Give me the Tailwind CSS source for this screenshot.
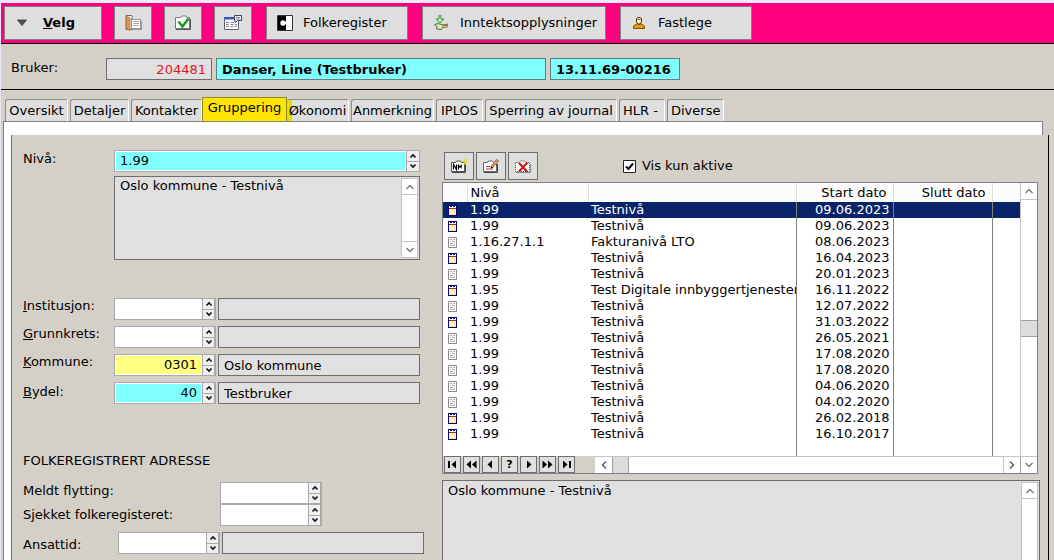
<!DOCTYPE html>
<html lang="no">
<head>
<meta charset="utf-8">
<meta name="viewport" content="width=device-width, initial-scale=1">
<title>Bruker – Gruppering</title>
<script src="https://cdn.jsdelivr.net/npm/@tailwindcss/browser@4"></script>
</head>
<body class="flex h-screen flex-col overflow-hidden border-l border-[#e6e6f4] bg-[#d4d0c8] font-['DejaVu_Sans',sans-serif] text-[13px] leading-4 text-black">

<svg class="hidden">
  <symbol id="up" viewBox="0 0 8 6"><path d="M1.5 4.5 4 2l2.5 2.5" fill="none" stroke="#111" stroke-width="1.6"/></symbol>
  <symbol id="down" viewBox="0 0 8 6"><path d="M1.5 1.5 4 4l2.5-2.5" fill="none" stroke="#111" stroke-width="1.6"/></symbol>
  <symbol id="chev-up" viewBox="0 0 10 10"><path d="M1.5 7 5 3.5 8.500 7" fill="none" stroke="#777" stroke-width="1.4"/></symbol>
  <symbol id="chev-down" viewBox="0 0 10 10"><path d="M1.500 3 5 6.500 8.500 3" fill="none" stroke="#777" stroke-width="1.4"/></symbol>
  <symbol id="chev-left" viewBox="0 0 10 10"><path d="M7 1.500 3.500 5 7 8.500" fill="none" stroke="#555" stroke-width="1.4"/></symbol>
  <symbol id="chev-right" viewBox="0 0 10 10"><path d="M3 1.500 6.500 5 3 8.500" fill="none" stroke="#555" stroke-width="1.4"/></symbol>
  <symbol id="active" viewBox="0 0 9 11">
    <path d="M0 0h9v11H0z" fill="#00007a"/><path d="M1 3h7v7H1z" fill="#ffe98a"/><path d="M1 1h1v1H1zM4 1h1v1H4zM7 1h1v1H7zM1 2h7v1H1z" fill="#fff"/><path d="M1 3h7v1H1z" fill="#a03020"/>
    <path d="M2 5h1v1H2zM4 5h1v1H4zM6 5h1v1H6zM3 6h1v1H3zM5 6h1v1H5zM2 7h1v1H2zM4 7h1v1H4zM6 7h1v1H6zM3 8h1v1H3zM5 8h1v1H5z" fill="#fffbe0"/>
  </symbol>
  <symbol id="inactive" viewBox="0 0 9 11">
    <path d="M.5.5h8v10h-8z" fill="#fff" stroke="#8a8a8a"/><path d="M2 2.500h2M5 2.500h2M2 4.500h1M4 4.500h3M2 6.500h3M6 6.500h1M2 8.500h2M5 8.500h2" stroke="#a8a8a8"/>
  </symbol>
</svg>

<div class="h-[3px] shrink-0 bg-[#ececf8]"></div>

<!-- Toolbar -->
<header class="flex h-[41px] shrink-0 items-center border-b border-black bg-[#ff0080] pl-[3px]">
  <button class="flex h-[34px] w-[98px] items-center border border-[#808080] bg-[#dedede] pl-3 font-bold">
    <svg class="h-2 w-[10px]" viewBox="0 0 10 8"><path d="M.5 1h9L5 6.500z" fill="#555" stroke="#333" stroke-width=".8"/></svg>
    <span class="ml-4"><u>V</u>elg</span>
  </button>
  <button aria-label="Journal" class="ml-3 flex h-[34px] w-[38px] items-center justify-center border border-[#808080] bg-[#dedede]">
    <svg class="h-4 w-[18px]" viewBox="0 0 18 16"><path d="M2 .5h6v14H2z" fill="#fff" stroke="#8c6a48"/><path d="M2.500 1 6 3v12.500L2.500 14z" fill="#e0975a" stroke="#a8602c" stroke-width=".7"/><path d="M7.500 4.500h9v9h-9z" fill="#fff" stroke="#444" stroke-dasharray="1 1"/><path d="M9 6.500h6M9 8.500h6M9 10.500h6" stroke="#aaa"/><path d="M8 14.500h9.500V6" fill="none" stroke="#999"/></svg>
  </button>
  <button aria-label="Godkjenn" class="ml-3 flex h-[34px] w-[38px] items-center justify-center border border-[#808080] bg-[#dedede]">
    <svg class="h-4 w-4" viewBox="0 0 16 16"><path d="M.5 2.500h5l1.500-1.500h4l1 1.500h2.500v11H.5z" fill="#fdfdfd" stroke="#777"/><path d="M1 14.500h14.500V4" fill="none" stroke="#555"/><path d="M3.500 6.500 7.500 11.500 13.500 3.500" fill="none" stroke="#12a012" stroke-width="2.400"/></svg>
  </button>
  <button aria-label="Notat" class="ml-3 flex h-[34px] w-[38px] items-center justify-center border border-[#808080] bg-[#dedede]">
    <svg class="h-4 w-[18px]" viewBox="0 0 18 16"><path d="M.5 2.500h14v12H.5z" fill="#fff" stroke="#667"/><path d="M0 2h11v2.500H0z" fill="#3358c0"/><path d="M2 7.500h3M6.500 7.500h3M2 9.500h3M6.500 9.500h3M11 9.500h2M2 11.500h3M6.500 11.500h3M11 11.500h2" stroke="#889"/><path d="M10.500.5h7v5h-4l-2.500 2.500v-2.500h-.5z" fill="#e8eef8" stroke="#445"/><path d="M12 2.500h4M12 4h4" stroke="#778" stroke-width=".8"/></svg>
  </button>
  <button class="ml-3.5 flex h-[34px] w-[142px] items-center border border-[#808080] bg-[#dedede] pl-2.5">
    <svg class="h-4 w-4" viewBox="0 0 16 16"><path d="M.5.500h15v15H.5z" fill="#fff" stroke="#333"/><path d="M1 1h8v14H1z"/><circle cx="6" cy="8" r="2.700" fill="#fff"/><path d="M6 6.800h4v2.400H6z" fill="#fff"/></svg>
    <span class="ml-2.5">Folkeregister</span>
  </button>
  <button class="ml-3.5 flex h-[34px] w-[184px] items-center border border-[#808080] bg-[#dedede] pl-[11px]">
    <svg class="h-4 w-[15px]" viewBox="0 0 15 16"><path d="M5 0h2v4h3L6 8 2 4h3z" fill="#b8f0b0" stroke="#2f8a3c" stroke-width=".9"/><path d="M.5 9.500 4 8.500l5 1.500 4.500-1-1 2.500H9L7.500 14.500l-5-.5.5-2.500z" fill="#d8e8a8" stroke="#56725a"/><path d="M8 10.500h6l-1 2H9" fill="#e0b070" stroke="#9a7040" stroke-width=".8"/></svg>
    <span class="ml-[11px]">Inntektsopplysninger</span>
  </button>
  <button class="ml-3.5 flex h-[34px] w-[132px] items-center border border-[#808080] bg-[#dedede] pl-3">
    <svg class="h-3 w-3" viewBox="0 0 12 12"><path d="M.5 11.500V9L3.500 7h5l3 2v2.500z" fill="#e09a10" stroke="#805000"/><path d="M3.500 1.500 5 .5h2l1.500 1v3.500L7 7H5L3.500 5z" fill="#fff0b8" stroke="#4a3410"/><path d="M4.500 2.500h3" stroke="#805818"/></svg>
    <span class="ml-[13px]">Fastlege</span>
  </button>
</header>

<!-- Current user -->
<section class="flex h-[46px] shrink-0 items-start gap-1 border-b border-black pl-2.5 pt-3.5 font-bold">
  <label for="bruker" class="mt-0.5 w-[91px] font-normal">Bruker:</label>
  <input id="bruker" value="204481" class="h-[22px] w-[106px] border border-[#6e6e6e] bg-[#e0e0e0] px-[5px] text-right font-normal text-[#e01820]">
  <input aria-label="Navn" value="Danser, Line (Testbruker)" class="h-[22px] w-[330px] border border-[#5f7f80] bg-[#80ffff] px-[5px]">
  <input aria-label="Fødselsnummer" value="13.11.69-00216" class="h-[22px] w-[130px] border border-[#5f7f80] bg-[#80ffff] px-[5px]">
</section>

<!-- Tabs -->
<nav role="tablist" class="flex h-[31px] shrink-0 items-end gap-0.5 pl-1">
  <button role="tab" class="h-[22px] w-[63px] rounded-t-[3px] border border-b-0 border-[#8c8c8c] border-r-white bg-[#dedede]">Oversikt</button>
  <button role="tab" class="h-[22px] w-[59px] whitespace-nowrap rounded-t-[3px] border border-b-0 border-[#8c8c8c] border-r-white bg-[#dedede]">Detaljer</button>
  <button role="tab" class="h-[22px] w-[71px] whitespace-nowrap rounded-t-[3px] border border-b-0 border-[#8c8c8c] border-r-white bg-[#dedede]">Kontakter</button>
  <button role="tab" aria-selected="true" class="-ml-0.5 h-6 w-[85px] border border-b-0 border-[#8f8a20] bg-[#ffe600] pb-1">Gruppering</button>
  <button role="tab" class="-ml-0.5 h-[22px] w-[62px] whitespace-nowrap rounded-t-[3px] border border-b-0 border-l-0 border-[#8c8c8c] border-r-white bg-linear-to-r from-[#e6dc00] from-[5px] to-[#dedede] to-[5px]">Økonomi</button>
  <button role="tab" class="h-[22px] w-[83px] whitespace-nowrap rounded-t-[3px] border border-b-0 border-[#8c8c8c] border-r-white bg-[#dedede]">Anmerkning</button>
  <button role="tab" class="h-[22px] w-[47px] whitespace-nowrap rounded-t-[3px] border border-b-0 border-[#8c8c8c] border-r-white bg-[#dedede]">IPLOS</button>
  <button role="tab" class="h-[22px] w-[132px] whitespace-nowrap rounded-t-[3px] border border-b-0 border-[#8c8c8c] border-r-white bg-[#dedede]">Sperring av journal</button>
  <button role="tab" class="h-[22px] w-[46px] whitespace-nowrap rounded-t-[3px] border border-b-0 border-[#8c8c8c] border-r-white bg-[#dedede] pl-[3px] text-left">HLR -</button>
  <button role="tab" class="h-[22px] w-[57px] whitespace-nowrap rounded-t-[3px] border border-b-0 border-[#8c8c8c] border-r-white bg-[#dedede] pl-[3px] text-left">Diverse</button>
</nav>

<main class="flex min-h-0 grow flex-col pl-0.5">
  <div class="mr-[11px] h-3.5 shrink-0 border-x border-t border-[#808080] bg-white"></div>
  <div class="flex min-h-0 grow border-l border-[#808080] bg-white pl-[7px] pr-0">
    <div class="flex min-w-0 grow bg-[#d4d0c8] pr-[5px]">
      <div class="flex min-w-0 grow border-l border-r border-l-[#6e6e6e] border-r-black pl-[11px] pr-2">

        <!-- Left form -->
        <form class="w-[419px] shrink-0 pt-[15px]">
          <div class="flex items-start">
            <label for="niva" class="w-[91px] leading-[18px]">Nivå:</label>
            <span class="flex h-[22px] w-[306px] gap-px border border-[#a9a9ad] bg-white pl-px">
              <input id="niva" value="1.99" class="my-px min-w-0 grow bg-[#80ffff] pl-1">
              <span class="flex w-[13px] shrink-0 flex-col gap-px bg-[#a9a9ad] pl-px">
                <button type="button" aria-label="Opp" class="flex grow items-center justify-center bg-[#efefef]"><svg class="h-1.5 w-2"><use href="#up"/></svg></button>
                <button type="button" aria-label="Ned" class="flex grow items-center justify-center bg-[#efefef]"><svg class="h-1.5 w-2"><use href="#down"/></svg></button>
              </span>
            </span>
          </div>
          <div class="ml-[91px] mt-1 flex h-[84px] w-[306px] border border-[#6e6e6e] bg-[#e0e0e0] p-px">
            <textarea aria-label="Nivåbeskrivelse" readonly class="grow resize-none overflow-hidden pl-1">Oslo kommune - Testnivå</textarea>
            <span class="flex w-[17px] flex-col justify-between border border-[#c4c4c4] bg-white">
              <button type="button" aria-label="Rull opp" class="flex h-4 items-center justify-center border-b border-[#c4c4c4]"><svg class="size-2.5"><use href="#chev-up"/></svg></button>
              <button type="button" aria-label="Rull ned" class="flex h-4 items-center justify-center border-t border-[#c4c4c4]"><svg class="size-2.5"><use href="#chev-down"/></svg></button>
            </span>
          </div>

          <div class="mt-[38px] flex flex-col gap-1.5">
            <div class="flex items-start">
              <label for="inst" class="w-[91px]"><u>I</u>nstitusjon:</label>
              <span class="flex h-[22px] w-[102px] gap-px border border-r-2 border-[#a9a9ad] bg-white pl-px">
                <input id="inst" class="my-px min-w-0 grow bg-white pr-1 text-right">
                <span class="flex w-[12px] shrink-0 flex-col gap-px bg-[#a9a9ad] pl-px">
                  <button type="button" aria-label="Opp" class="flex grow items-center justify-center bg-[#efefef]"><svg class="h-1.5 w-2"><use href="#up"/></svg></button>
                  <button type="button" aria-label="Ned" class="flex grow items-center justify-center bg-[#efefef]"><svg class="h-1.5 w-2"><use href="#down"/></svg></button>
                </span>
              </span>
              <input aria-label="Institusjonsnavn" readonly class="ml-0.5 h-[22px] w-[202px] border border-[#6e6e6e] bg-[#e0e0e0] px-[5px]">
            </div>
            <div class="flex items-start">
              <label for="grunn" class="w-[91px]"><u>G</u>runnkrets:</label>
              <span class="flex h-[22px] w-[102px] gap-px border border-r-2 border-[#a9a9ad] bg-white pl-px">
                <input id="grunn" class="my-px min-w-0 grow bg-white pr-1 text-right">
                <span class="flex w-[12px] shrink-0 flex-col gap-px bg-[#a9a9ad] pl-px">
                  <button type="button" aria-label="Opp" class="flex grow items-center justify-center bg-[#efefef]"><svg class="h-1.5 w-2"><use href="#up"/></svg></button>
                  <button type="button" aria-label="Ned" class="flex grow items-center justify-center bg-[#efefef]"><svg class="h-1.5 w-2"><use href="#down"/></svg></button>
                </span>
              </span>
              <input aria-label="Grunnkretsnavn" readonly class="ml-0.5 h-[22px] w-[202px] border border-[#6e6e6e] bg-[#e0e0e0] px-[5px]">
            </div>
            <div class="flex items-start">
              <label for="komm" class="w-[91px]"><u>K</u>ommune:</label>
              <span class="flex h-[22px] w-[102px] gap-px border border-r-2 border-[#a9a9ad] bg-white pl-px">
                <input id="komm" value="0301" class="my-px min-w-0 grow bg-[#ffff80] pr-1 text-right">
                <span class="flex w-[12px] shrink-0 flex-col gap-px bg-[#a9a9ad] pl-px">
                  <button type="button" aria-label="Opp" class="flex grow items-center justify-center bg-[#efefef]"><svg class="h-1.5 w-2"><use href="#up"/></svg></button>
                  <button type="button" aria-label="Ned" class="flex grow items-center justify-center bg-[#efefef]"><svg class="h-1.5 w-2"><use href="#down"/></svg></button>
                </span>
              </span>
              <input aria-label="Kommunenavn" readonly value="Oslo kommune" class="ml-0.5 h-[22px] w-[202px] border border-[#6e6e6e] bg-[#e0e0e0] px-[5px]">
            </div>
            <div class="flex items-start">
              <label for="bydel" class="w-[91px] leading-5"><u>B</u>ydel:</label>
              <span class="flex h-[22px] w-[102px] gap-px border border-r-2 border-[#a9a9ad] bg-white pl-px">
                <input id="bydel" value="40" class="my-px min-w-0 grow bg-[#80ffff] pr-1 text-right">
                <span class="flex w-[12px] shrink-0 flex-col gap-px bg-[#a9a9ad] pl-px">
                  <button type="button" aria-label="Opp" class="flex grow items-center justify-center bg-[#efefef]"><svg class="h-1.5 w-2"><use href="#up"/></svg></button>
                  <button type="button" aria-label="Ned" class="flex grow items-center justify-center bg-[#efefef]"><svg class="h-1.5 w-2"><use href="#down"/></svg></button>
                </span>
              </span>
              <input aria-label="Bydelsnavn" readonly value="Testbruker" class="ml-0.5 h-[22px] w-[202px] border border-[#6e6e6e] bg-[#e0e0e0] px-[5px]">
            </div>
          </div>

          <h2 class="mt-12 leading-[18px]">FOLKEREGISTRERT ADRESSE</h2>
          <div class="mt-3 flex items-start">
            <label for="flytt" class="w-[197px] leading-[18px]">Meldt flytting:</label>
            <span class="flex h-[22px] w-[102px] gap-px border border-r-2 border-[#a9a9ad] bg-white pl-px">
              <input id="flytt" class="my-px min-w-0 grow bg-white">
              <span class="flex w-[12px] shrink-0 flex-col gap-px bg-[#a9a9ad] pl-px">
                <button type="button" aria-label="Opp" class="flex grow items-center justify-center bg-[#efefef]"><svg class="h-1.5 w-2"><use href="#up"/></svg></button>
                <button type="button" aria-label="Ned" class="flex grow items-center justify-center bg-[#efefef]"><svg class="h-1.5 w-2"><use href="#down"/></svg></button>
              </span>
            </span>
          </div>
          <div class="flex items-center">
            <label for="sjekk" class="w-[197px] leading-[18px]">Sjekket folkeregisteret:</label>
            <span class="flex h-[22px] w-[102px] gap-px border border-r-2 border-[#a9a9ad] bg-white pl-px">
              <input id="sjekk" class="my-px min-w-0 grow bg-white">
              <span class="flex w-[12px] shrink-0 flex-col gap-px bg-[#a9a9ad] pl-px">
                <button type="button" aria-label="Opp" class="flex grow items-center justify-center bg-[#efefef]"><svg class="h-1.5 w-2"><use href="#up"/></svg></button>
                <button type="button" aria-label="Ned" class="flex grow items-center justify-center bg-[#efefef]"><svg class="h-1.5 w-2"><use href="#down"/></svg></button>
              </span>
            </span>
          </div>
          <div class="mt-1.5 flex items-end">
            <label for="ansatt" class="w-[95px] leading-[18px]">Ansattid:</label>
            <span class="flex h-[22px] w-[102px] gap-px border border-r-2 border-[#a9a9ad] bg-white pl-px">
              <input id="ansatt" class="my-px min-w-0 grow bg-white">
              <span class="flex w-[12px] shrink-0 flex-col gap-px bg-[#a9a9ad] pl-px">
                <button type="button" aria-label="Opp" class="flex grow items-center justify-center bg-[#efefef]"><svg class="h-1.5 w-2"><use href="#up"/></svg></button>
                <button type="button" aria-label="Ned" class="flex grow items-center justify-center bg-[#efefef]"><svg class="h-1.5 w-2"><use href="#down"/></svg></button>
              </span>
            </span>
            <input aria-label="Ansattnavn" readonly class="ml-0.5 h-[22px] w-[202px] border border-[#6e6e6e] bg-[#e0e0e0] px-[5px]">
          </div>
        </form>

        <!-- Level history -->
        <section class="flex min-w-0 grow flex-col pt-[17px]">
          <div class="flex shrink-0 items-center gap-0.5 pl-0.5">
            <button aria-label="Ny" class="flex h-7 w-[30px] items-center justify-center border border-[#6e6e6e] bg-[#dedede]">
              <svg class="h-4 w-[18px]" viewBox="0 0 18 16"><path d="M1.500 4.500h4l1-1.500h4l1 1.500h3v9h-13z" fill="#fff" stroke="#555"/><path d="M2 14.500h13.500V6" fill="none" stroke="#444"/><path d="M3.500 11.500v-5l3 5v-5M8.500 6.500v5M8 6.500l1 3 1-1.500 1 1.500.5-3" fill="none" stroke="#000" stroke-width="1.200"/><path d="M15 0v7M11.500 3.500h7M12.500 1l5 5M17.500 1l-5 5" stroke="#e8dc20"/></svg>
            </button>
            <button aria-label="Endre" class="flex h-7 w-[30px] items-center justify-center border border-[#6e6e6e] bg-[#dedede]">
              <svg class="h-4 w-[18px]" viewBox="0 0 18 16"><path d="M1.500 4.500h4l1-1.500h4l1 1.500h3v9h-13z" fill="#fff" stroke="#666"/><path d="M2 14.500h13.500V6" fill="none" stroke="#444"/><path d="M4 8.500h4M4 11h7" stroke="#b03030"/><path d="M9 8.500 14.500 1.500 16.500 3 11 9.500z" fill="#f0a060" stroke="#8a5030" stroke-width=".8"/><path d="M9 8.500l-.5 2 2.500-1z"/></svg>
            </button>
            <button aria-label="Slett" class="flex h-7 w-[30px] items-center justify-center border border-[#6e6e6e] bg-[#dedede]">
              <svg class="h-4 w-[18px]" viewBox="0 0 18 16"><path d="M1.500 4.500h4l1-1.500h4l1 1.500h4v9h-14z" fill="#fff" stroke="#444" stroke-dasharray="1 1"/><path d="M2 14.500h14.500V6" fill="none" stroke="#888"/><path d="M5 5l8 8.500M13.500 4.500 5 13.500" stroke="#d01818" stroke-width="2.200"/></svg>
            </button>
            <label class="ml-[83px] flex items-center gap-[6px]">
              <input type="checkbox" checked class="peer sr-only">
              <svg class="size-[13px]" viewBox="0 0 13 13"><path d="M.5.500h12v12H.5z" fill="#fff" stroke="#222"/><path d="M3 6.500 5.500 9 10 3.500" fill="none" stroke="#000" stroke-width="2"/></svg>
              Vis kun aktive
            </label>
          </div>

          <div class="mt-0.5 shrink-0 border border-[#808080] bg-white" style="margin-right:2px">
            <div class="flex">
              <table class="w-full min-w-0 table-fixed border-collapse text-left">
                <colgroup><col class="w-6"><col class="w-[121px]"><col class="w-[208px]"><col class="w-[97px]"><col class="w-[99px]"><col></colgroup>
                <thead>
                  <tr class="h-[19px] bg-[#fcfcfc]">
                    <th class="border-r border-[#dcdcdc] p-0"></th>
                    <th class="border-r border-[#dcdcdc] p-0 pl-[3px] font-normal">Nivå</th>
                    <th class="border-r border-[#dcdcdc] p-0"></th>
                    <th class="border-r border-[#dcdcdc] p-0 pr-1.5 text-right font-normal">Start dato</th>
                    <th class="border-r border-[#dcdcdc] p-0 pr-1.5 text-right font-normal">Slutt dato</th>
                    <th class="p-0"></th>
                  </tr>
                </thead>
                <tbody id="rows"></tbody>
              </table>
              <div class="flex w-[17px] shrink-0 flex-col border-l border-[#c4c4c4]">
                <button aria-label="Rull opp" class="flex h-[17px] shrink-0 items-center justify-center border-b border-[#c4c4c4]"><svg class="size-2.5"><use href="#chev-up"/></svg></button>
                <div class="mt-[120px] h-[17px] border-y border-[#a0a0a0] bg-[#dcdcdc]"></div>
              </div>
            </div>
            <div class="flex h-[17px] bg-[#d4d0c8]">
              <div class="flex w-[152px] shrink-0 gap-0.5 pl-px">
                <button aria-label="Første" class="flex w-[17px] items-center justify-center border border-[#6e6e6e] bg-[#e0e0e0]"><svg class="h-[9px] w-[11px]" viewBox="0 0 11 9"><path d="M1 1h2v7H1zM9 .5v8L4.500 4.500z"/></svg></button>
                <button aria-label="Forrige side" class="flex w-[17px] items-center justify-center border border-[#6e6e6e] bg-[#e0e0e0]"><svg class="h-[9px] w-[11px]" viewBox="0 0 11 9"><path d="M5 .5v8L.5 4.500zM10.500 .5v8L6 4.500z"/></svg></button>
                <button aria-label="Forrige" class="flex w-[17px] items-center justify-center border border-[#6e6e6e] bg-[#e0e0e0]"><svg class="h-[9px] w-[11px]" viewBox="0 0 11 9"><path d="M7 .5v8L2.500 4.500z"/></svg></button>
                <button aria-label="Søk" class="flex w-[17px] items-center justify-center border border-[#6e6e6e] bg-[#e0e0e0] text-[11px] font-bold leading-3">?</button>
                <button aria-label="Neste" class="flex w-[17px] items-center justify-center border border-[#6e6e6e] bg-[#e0e0e0]"><svg class="h-[9px] w-[11px]" viewBox="0 0 11 9"><path d="M4 .5v8l4.500-4z"/></svg></button>
                <button aria-label="Neste side" class="flex w-[17px] items-center justify-center border border-[#6e6e6e] bg-[#e0e0e0]"><svg class="h-[9px] w-[11px]" viewBox="0 0 11 9"><path d="M.5 .5v8L5 4.500zM6 .5v8l4.500-4z"/></svg></button>
                <button aria-label="Siste" class="flex w-[17px] items-center justify-center border border-[#6e6e6e] bg-[#e0e0e0]"><svg class="h-[9px] w-[11px]" viewBox="0 0 11 9"><path d="M8 1h2v7H8zM2 .5v8l4.500-4z"/></svg></button>
              </div>
              <div class="flex grow border-t border-[#c4c4c4] bg-white">
                <button aria-label="Rull venstre" class="flex w-[17px] items-center justify-center"><svg class="size-2.5"><use href="#chev-left"/></svg></button>
                <div class="w-[17px] border-x border-[#a0a0a0] bg-[#dcdcdc]"></div>
                <button aria-label="Rull høyre" class="ml-auto flex w-[17px] items-center justify-center border-l border-[#c4c4c4]"><svg class="size-2.5"><use href="#chev-right"/></svg></button>
                <button aria-label="Rull ned" class="flex w-[17px] items-center justify-center border-l border-[#a0a0a0]"><svg class="size-2.5"><use href="#chev-down"/></svg></button>
              </div>
            </div>
          </div>

          <div class="mt-1.5 flex min-h-0 grow border border-b-0 border-[#6e6e6e] bg-[#e0e0e0] px-px pt-px">
            <textarea aria-label="Beskrivelse" readonly class="grow resize-none overflow-hidden pl-1 pt-px">Oslo kommune - Testnivå</textarea>
            <span class="flex w-[17px] flex-col border border-b-0 border-[#c4c4c4] bg-white">
              <button aria-label="Rull opp" class="flex h-4 items-center justify-center border-b border-[#c4c4c4]"><svg class="size-2.5"><use href="#chev-up"/></svg></button>
            </span>
          </div>
        </section>
      </div>
    </div>
  </div>
</main>

<script>
  const levels = [
    [1, '1.99', 'Testnivå', '09.06.2023'],
    [1, '1.99', 'Testnivå', '09.06.2023'],
    [0, '1.16.27.1.1', 'Fakturanivå LTO', '08.06.2023'],
    [1, '1.99', 'Testnivå', '16.04.2023'],
    [0, '1.99', 'Testnivå', '20.01.2023'],
    [1, '1.95', 'Test Digitale innbyggertjenester', '16.11.2022'],
    [0, '1.99', 'Testnivå', '12.07.2022'],
    [1, '1.99', 'Testnivå', '31.03.2022'],
    [0, '1.99', 'Testnivå', '26.05.2021'],
    [0, '1.99', 'Testnivå', '17.08.2020'],
    [0, '1.99', 'Testnivå', '17.08.2020'],
    [0, '1.99', 'Testnivå', '04.06.2020'],
    [0, '1.99', 'Testnivå', '04.02.2020'],
    [1, '1.99', 'Testnivå', '26.02.2018'],
    [1, '1.99', 'Testnivå', '16.10.2017'],
  ];
  const line = 'border-r border-[#808080] p-0';
  document.getElementById('rows').innerHTML = levels.map(([active, code, name, start], i) => `
    <tr class="${i ? 'h-4' : 'h-4 bg-[#0a246a] text-white'}">
      <td class="p-0 pl-[5px]"><svg class="h-[11px] w-[9px]"><use href="#${active ? 'active' : 'inactive'}"/></svg></td>
      <td class="p-0 pl-[3px]">${code}</td>
      <td class="${line}"><div class="overflow-hidden whitespace-nowrap pl-[3px]">${name}</div></td>
      <td class="${line}"><div class="pr-[3px] text-right">${start}</div></td>
      <td class="${line}"></td>
      <td class="p-0"></td>
    </tr>`).join('') +
    `<tr class="h-3.5"><td class="p-0"></td><td class="p-0"></td><td class="${line}"></td><td class="${line}"></td><td class="${line}"></td><td class="p-0"></td></tr>`;
</script>
</body>
</html>
